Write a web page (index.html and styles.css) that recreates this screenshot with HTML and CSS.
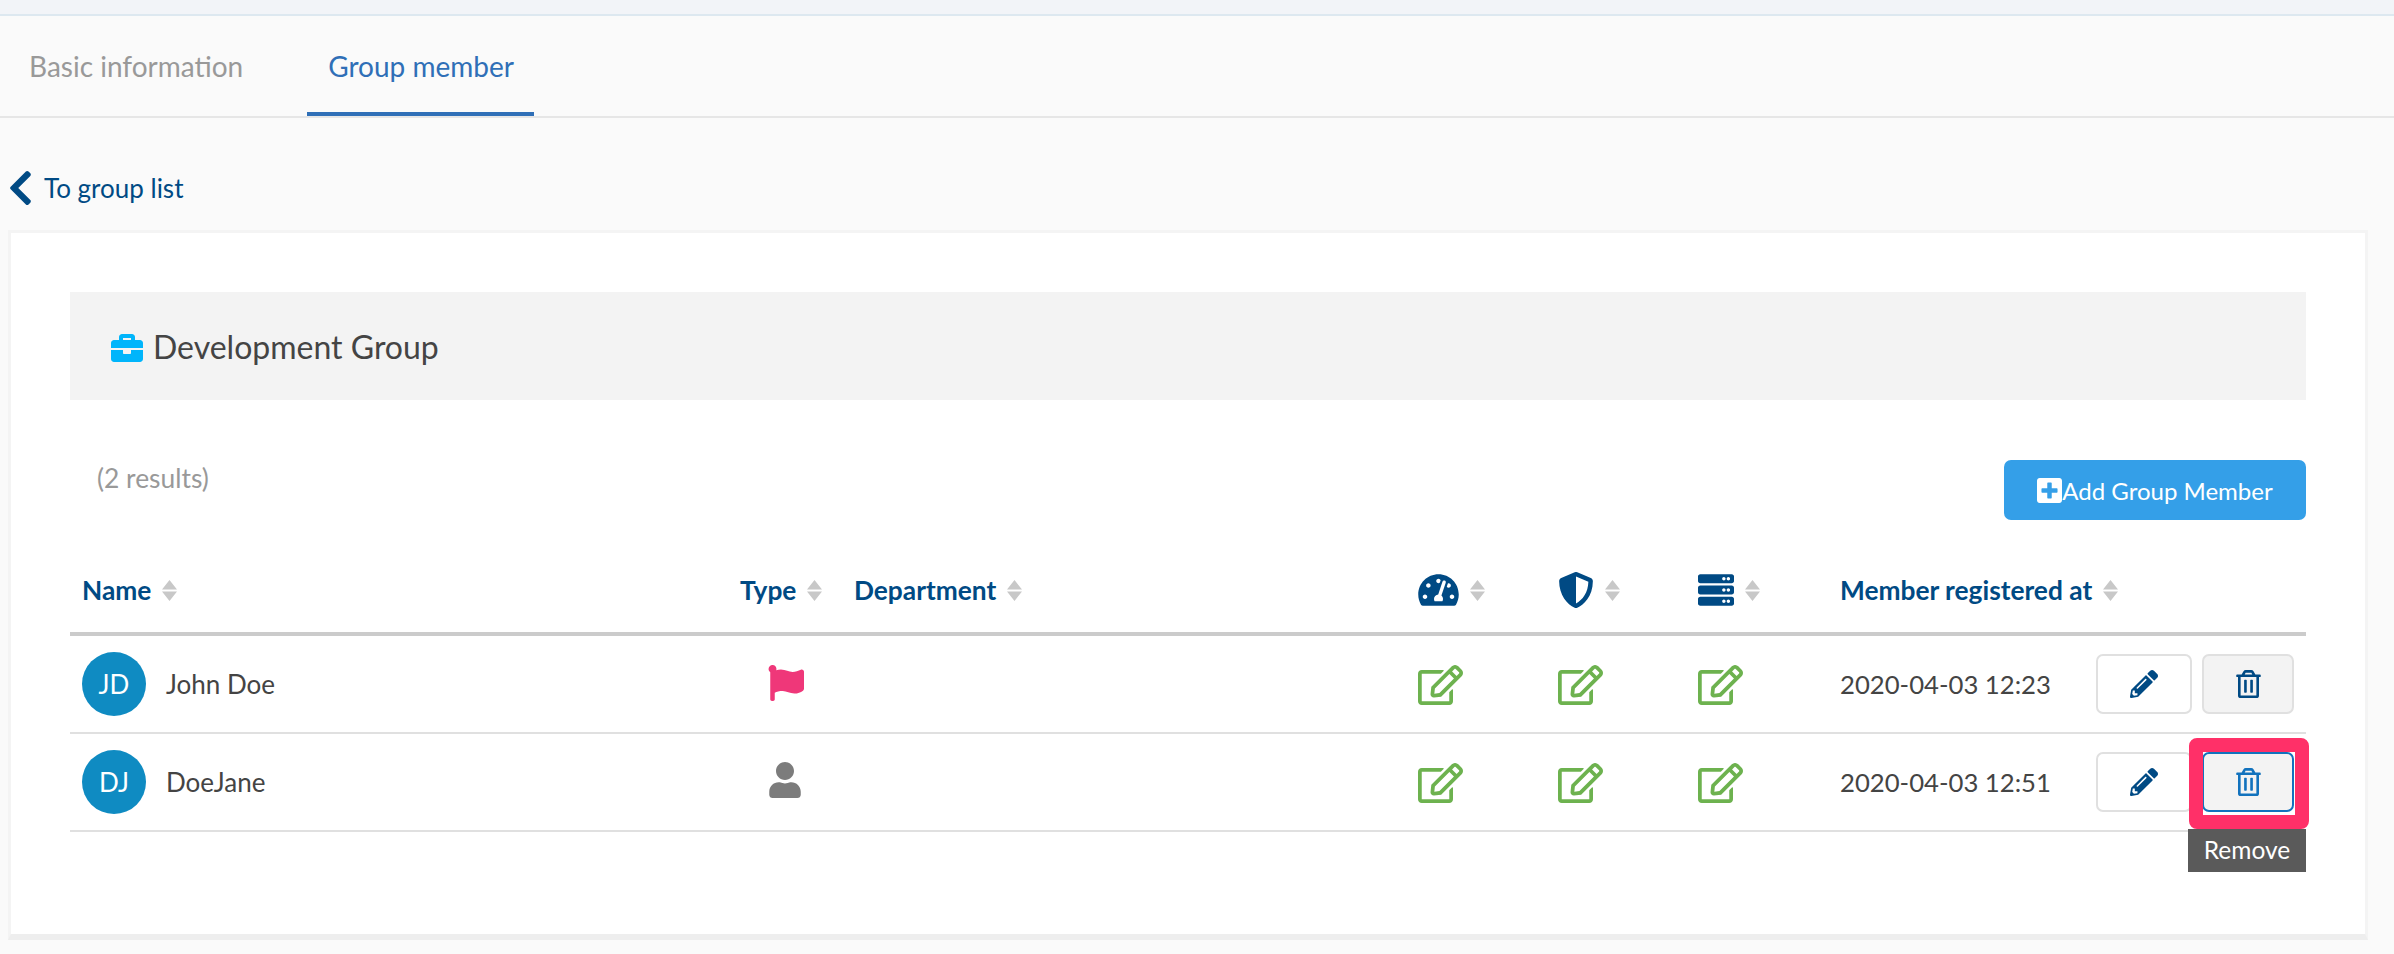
FILE: index.html
```html
<!DOCTYPE html>
<html lang="en">
<head>
<meta charset="utf-8">
<title>Group member</title>
<link rel="stylesheet" href="styles.css">
</head>
<body>
<svg class="sprites" aria-hidden="true">
  <symbol id="i-chevron" viewBox="0 0 320 512"><path d="M34.52 239.03L228.87 44.69c9.37-9.37 24.57-9.37 33.94 0l22.67 22.67c9.36 9.36 9.37 24.52.04 33.9L131.49 256l154.02 154.75c9.34 9.38 9.32 24.54-.04 33.9l-22.67 22.67c-9.37 9.37-24.57 9.37-33.94 0L34.52 272.97c-9.37-9.37-9.37-24.57 0-33.94z"/></symbol>
  <symbol id="i-briefcase" viewBox="0 0 512 512"><path d="M320 336c0 8.84-7.16 16-16 16h-96c-8.84 0-16-7.16-16-16v-48H0v144c0 25.6 22.4 48 48 48h416c25.6 0 48-22.4 48-48V288H320v48zm144-208h-80V80c0-25.6-22.4-48-48-48H176c-25.6 0-48 22.4-48 48v48H48c-25.6 0-48 22.4-48 48v80h512v-80c0-25.6-22.4-48-48-48zm-144 0H192V96h128v32z"/></symbol>
  <symbol id="i-plus" viewBox="0 0 448 512"><path d="M400 32H48C21.5 32 0 53.5 0 80v352c0 26.5 21.5 48 48 48h352c26.5 0 48-21.5 48-48V80c0-26.5-21.5-48-48-48zm-32 252c0 6.6-5.4 12-12 12h-92v92c0 6.6-5.4 12-12 12h-56c-6.6 0-12-5.4-12-12v-92H92c-6.6 0-12-5.4-12-12v-56c0-6.6 5.4-12 12-12h92v-92c0-6.6 5.4-12 12-12h56c6.6 0 12 5.4 12 12v92h92c6.6 0 12 5.4 12 12v56z"/></symbol>
  <symbol id="i-sort" viewBox="0 0 15 21"><path d="M7.5 0L15 9.5H0zM0 11.5h15L7.5 21z"/></symbol>
  <symbol id="i-gauge" viewBox="0 0 576 512"><path d="M288 32C128.94 32 0 160.94 0 320c0 52.8 14.25 102.26 39.06 144.8 5.61 9.62 16.3 15.2 27.44 15.2h443c11.14 0 21.83-5.58 27.44-15.2C561.75 422.26 576 372.8 576 320c0-159.06-128.94-288-288-288zm0 64c14.71 0 26.58 10.13 30.32 23.65-1.11 2.26-2.64 4.23-3.45 6.67l-9.22 27.67c-5.13 3.49-10.97 6.01-17.64 6.01-17.67 0-32-14.33-32-32S270.33 96 288 96zM96 384c-17.67 0-32-14.33-32-32s14.33-32 32-32 32 14.33 32 32-14.33 32-32 32zm48-160c-17.67 0-32-14.33-32-32s14.33-32 32-32 32 14.33 32 32-14.33 32-32 32zm246.77-72.41l-61.33 184C343.13 347.33 352 364.54 352 384c0 11.72-3.38 22.55-8.88 32H232.88c-5.5-9.45-8.88-20.28-8.88-32 0-33.94 26.5-61.43 59.9-63.59l61.34-184.01c4.17-12.56 17.73-19.45 30.36-15.17 12.57 4.19 19.35 17.79 15.17 30.36zm14.66 57.2l15.52-46.55c3.47-1.29 7.13-2.23 11.05-2.23 17.67 0 32 14.33 32 32s-14.33 32-32 32c-11.38-.01-20.89-6.28-26.57-15.22zM480 384c-17.67 0-32-14.33-32-32s14.33-32 32-32 32 14.33 32 32-14.33 32-32 32z"/></symbol>
  <symbol id="i-shield" viewBox="0 0 512 512"><path d="M466.5 83.7l-192-80a48.15 48.15 0 0 0-36.9 0l-192 80C27.7 91.1 16 108.6 16 128c0 198.5 114.5 335.7 221.5 380.3 11.8 4.9 25.1 4.9 36.9 0C360.1 472.6 496 349.3 496 128c0-19.4-11.7-36.9-29.5-44.3zM256.1 446.3l-.1-381 175.9 73.3c-3.3 151.4-82.1 261.1-175.8 307.7z"/></symbol>
  <symbol id="i-server" viewBox="0 0 512 512"><path d="M480 160H32c-17.673 0-32-14.327-32-32V64c0-17.673 14.327-32 32-32h448c17.673 0 32 14.327 32 32v64c0 17.673-14.327 32-32 32zm-48-88c-13.255 0-24 10.745-24 24s10.745 24 24 24 24-10.745 24-24-10.745-24-24-24zm-64 0c-13.255 0-24 10.745-24 24s10.745 24 24 24 24-10.745 24-24-10.745-24-24-24zm112 248H32c-17.673 0-32-14.327-32-32v-64c0-17.673 14.327-32 32-32h448c17.673 0 32 14.327 32 32v64c0 17.673-14.327 32-32 32zm-48-88c-13.255 0-24 10.745-24 24s10.745 24 24 24 24-10.745 24-24-10.745-24-24-24zm-64 0c-13.255 0-24 10.745-24 24s10.745 24 24 24 24-10.745 24-24-10.745-24-24-24zm112 248H32c-17.673 0-32-14.327-32-32v-64c0-17.673 14.327-32 32-32h448c17.673 0 32 14.327 32 32v64c0 17.673-14.327 32-32 32zm-48-88c-13.255 0-24 10.745-24 24s10.745 24 24 24 24-10.745 24-24-10.745-24-24-24zm-64 0c-13.255 0-24 10.745-24 24s10.745 24 24 24 24-10.745 24-24-10.745-24-24-24z"/></symbol>
  <symbol id="i-edit" viewBox="0 0 576 512"><path d="M402.3 344.9l32-32c5-5 13.7-1.5 13.7 5.7V464c0 26.5-21.5 48-48 48H48c-26.5 0-48-21.5-48-48V112c0-26.5 21.5-48 48-48h273.5c7.1 0 10.7 8.6 5.7 13.7l-32 32c-1.5 1.5-3.5 2.3-5.7 2.3H48v352h352V350.5c0-2.1.8-4.1 2.3-5.6zm156.6-201.8L296.3 405.7l-90.4 10c-26.2 2.9-48.5-19.2-45.6-45.6l10-90.4L432.9 17.1c22.9-22.9 59.9-22.9 82.7 0l43.2 43.2c22.9 22.9 22.9 60 .1 82.8zM460.1 174L402 115.9 216.2 301.8l-7.3 65.3 65.3-7.3L460.1 174zm64.8-79.7l-43.2-43.2c-4.1-4.1-10.8-4.1-14.8 0L436 82l58.1 58.1 30.9-30.9c4-4.2 4-10.8-.1-14.9z"/></symbol>
  <symbol id="i-pencil" viewBox="0 0 512 512"><path d="M497.9 142.1l-46.1 46.1c-4.7 4.7-12.3 4.7-17 0l-111-111c-4.7-4.7-4.7-12.3 0-17l46.1-46.1c18.7-18.7 49.1-18.7 67.9 0l60.1 60.1c18.8 18.7 18.8 49.1 0 67.9zM284.2 99.8L21.6 362.4.4 483.9c-2.9 16.4 11.4 30.6 27.8 27.8l121.5-21.3 262.6-262.6c4.7-4.7 4.7-12.3 0-17l-111-111c-4.8-4.7-12.4-4.7-17.1 0zM124.1 339.9c-5.5-5.5-5.5-14.3 0-19.8l154-154c5.5-5.5 14.3-5.5 19.8 0s5.5 14.3 0 19.8l-154 154c-5.5 5.5-14.3 5.5-19.8 0zM88 424h48v36.3l-64.5 11.3-31.1-31.1L51.7 376H88v48z"/></symbol>
  <symbol id="i-trash" viewBox="0 0 448 512"><path d="M268 416h24a12 12 0 0 0 12-12V188a12 12 0 0 0-12-12h-24a12 12 0 0 0-12 12v216a12 12 0 0 0 12 12zM432 80h-82.41l-34-56.7A48 48 0 0 0 274.41 0H173.59a48 48 0 0 0-41.16 23.3L98.41 80H16A16 16 0 0 0 0 96v16a16 16 0 0 0 16 16h16v336a48 48 0 0 0 48 48h288a48 48 0 0 0 48-48V128h16a16 16 0 0 0 16-16V96a16 16 0 0 0-16-16zM171.84 50.91A6 6 0 0 1 177 48h94a6 6 0 0 1 5.15 2.91L293.61 80H154.39zM368 464H80V128h288zm-212-48h24a12 12 0 0 0 12-12V188a12 12 0 0 0-12-12h-24a12 12 0 0 0-12 12v216a12 12 0 0 0 12 12z"/></symbol>
  <symbol id="i-flag" viewBox="0 0 512 512"><path d="M349.565 98.783C295.978 98.783 251.721 64 184.348 64c-24.955 0-47.309 4.384-68.045 12.013a55.947 55.947 0 0 0 3.586-23.562C118.117 24.015 94.806 1.206 66.338.048 34.345-1.254 8 24.296 8 56c0 19.026 9.497 35.825 24 45.945V488c0 13.255 10.745 24 24 24h16c13.255 0 24-10.745 24-24v-94.4c28.311-12.064 63.582-22.122 114.435-22.122 53.588 0 97.844 34.783 165.217 34.783 48.169 0 86.667-16.294 122.505-40.858C506.84 359.452 512 349.571 512 339.045v-243.1c0-23.393-24.269-38.87-45.485-29.016-34.338 15.948-76.454 31.854-116.95 31.854z"/></symbol>
  <symbol id="i-user" viewBox="0 0 448 512"><path d="M224 256c70.7 0 128-57.3 128-128S294.7 0 224 0 96 57.3 96 128s57.3 128 128 128zm89.6 32h-16.7c-22.2 10.2-46.9 16-72.9 16s-50.6-5.8-72.9-16h-16.7C60.2 288 0 348.2 0 422.4V464c0 26.5 21.5 48 48 48h352c26.5 0 48-21.5 48-48v-41.6c0-74.2-60.2-134.4-134.4-134.4z"/></symbol>
</svg>

<div class="topstrip"></div>
<nav class="tabs">
  <a class="tab">Basic information</a>
  <a class="tab tab-active">Group member</a>
</nav>

<a class="back"><svg class="ic-chevron"><use href="#i-chevron"/></svg><span>To group list</span></a>

<main class="card">
  <header class="group-head">
    <svg class="ic-briefcase"><use href="#i-briefcase"/></svg>
    <h1 class="group-title">Development Group</h1>
  </header>

  <div class="toolbar">
    <span class="results">(2 results)</span>
    <button class="add-btn"><svg class="ic-plus"><use href="#i-plus"/></svg>Add Group Member</button>
  </div>

  <table class="members">
    <colgroup>
      <col class="c-name"><col class="c-type"><col class="c-dept"><col class="c-perm"><col class="c-perm"><col class="c-perm3"><col>
    </colgroup>
    <thead>
      <tr>
        <th><span class="th-in">Name<svg class="ic-sort"><use href="#i-sort"/></svg></span></th>
        <th><span class="th-in">Type<svg class="ic-sort"><use href="#i-sort"/></svg></span></th>
        <th><span class="th-in">Department<svg class="ic-sort"><use href="#i-sort"/></svg></span></th>
        <th><span class="th-in"><svg class="ic-head ic-wide"><use href="#i-gauge"/></svg><svg class="ic-sort"><use href="#i-sort"/></svg></span></th>
        <th><span class="th-in"><svg class="ic-head"><use href="#i-shield"/></svg><svg class="ic-sort"><use href="#i-sort"/></svg></span></th>
        <th><span class="th-in"><svg class="ic-head"><use href="#i-server"/></svg><svg class="ic-sort"><use href="#i-sort"/></svg></span></th>
        <th><span class="th-in">Member registered at<svg class="ic-sort"><use href="#i-sort"/></svg></span></th>
      </tr>
    </thead>
    <tbody>
      <tr>
        <td><div class="person"><span class="avatar">JD</span><span>John Doe</span></div></td>
        <td><svg class="ic-flag"><use href="#i-flag"/></svg></td>
        <td></td>
        <td><svg class="ic-edit"><use href="#i-edit"/></svg></td>
        <td><svg class="ic-edit"><use href="#i-edit"/></svg></td>
        <td><svg class="ic-edit"><use href="#i-edit"/></svg></td>
        <td>
          <div class="last-cell">
            <span>2020-04-03 12:23</span>
            <div class="actions">
              <button class="btn btn-edit"><svg class="ic-pencil"><use href="#i-pencil"/></svg></button>
              <button class="btn btn-del"><svg class="ic-trash"><use href="#i-trash"/></svg></button>
            </div>
          </div>
        </td>
      </tr>
      <tr>
        <td><div class="person"><span class="avatar">DJ</span><span>DoeJane</span></div></td>
        <td><svg class="ic-user"><use href="#i-user"/></svg></td>
        <td></td>
        <td><svg class="ic-edit"><use href="#i-edit"/></svg></td>
        <td><svg class="ic-edit"><use href="#i-edit"/></svg></td>
        <td><svg class="ic-edit"><use href="#i-edit"/></svg></td>
        <td>
          <div class="last-cell">
            <span>2020-04-03 12:51</span>
            <div class="actions">
              <button class="btn btn-edit"><svg class="ic-pencil"><use href="#i-pencil"/></svg></button>
              <div class="del-wrap">
                <button class="btn btn-del btn-focus"><svg class="ic-trash"><use href="#i-trash"/></svg></button>
                <span class="highlight"></span>
                <span class="tooltip">Remove</span>
              </div>
            </div>
          </div>
        </td>
      </tr>
    </tbody>
  </table>
</main>
</body>
</html>
```

FILE: styles.css
```css
* { box-sizing: border-box; }
html, body { margin: 0; padding: 0; }
body {
  background: #fafafa;
  font-family: Lato, "Open Sans", sans-serif;
  color: #444;
  font-size: 26px;
  height: 954px;
  overflow: hidden;
}
.sprites { display: none; }
svg { display: block; fill: currentColor; flex: none; }

.topstrip { height: 16px; background: #f2f4f8; border-bottom: 2px solid #dde8f0; }

.tabs { display: flex; gap: 42px; height: 102px; border-bottom: 2px solid #e6e6e6; padding-left: 7px; }
.tab {
  display: flex; align-items: center; white-space: nowrap;
  font-size: 28px; color: #999; height: 100px; padding: 0 22px;
}
.tab-active {
  color: #2f6fb7;
  padding: 4px 20px 0 21px;
  border-bottom: 4px solid #2f6fb7;
}

.back {
  display: flex; align-items: flex-end; color: #004a84;
  height: 112px; padding: 0 0 26px 8px; gap: 11px; font-size: 26px;
}
.ic-chevron { width: 25px; height: 40px; margin-bottom: -4px; }

.card {
  margin-left: 8px; width: 2360px; height: 710px; background: #fff;
  border: 3px solid #f4f4f4; border-bottom-width: 6px; border-bottom-color: #eee;
  padding: 59px 59px 0;
}

.group-head {
  display: flex; align-items: center; gap: 10px;
  height: 108px; background: #f3f3f3; padding-left: 41px;
}
.ic-briefcase { width: 32px; height: 32px; color: #00b5fb; margin-top: 4px; }
.group-title { margin: 0; font-size: 32px; font-weight: 400; color: #444; }

.toolbar { display: flex; justify-content: space-between; align-items: flex-start; margin-top: 60px; height: 60px; padding-left: 27px; }
.results { color: #999; font-size: 26.4px; line-height: 36px; }
.add-btn {
  display: flex; align-items: center; justify-content: center;
  width: 302px; height: 60px; border: 0; border-radius: 7px;
  background: #349fe8; color: #fff; font: 400 24px Lato, sans-serif;
}
.ic-plus { width: 25px; height: 29px; }

.members { width: 2236px; table-layout: fixed; border-collapse: separate; border-spacing: 0; }
.c-name { width: 657px; }
.c-type { width: 114px; }
.c-dept { width: 564px; }
.c-perm { width: 140px; }
.c-perm3 { width: 142px; }

.members th {
  height: 116px; padding: 52px 13px 24px; border-bottom: 4px solid #cbcbcb;
  text-align: left; font-size: 26.3px; font-weight: 700; color: #004a84;
}
.members th:first-child, .members td:first-child { padding-left: 12px; }
.th-in { display: flex; align-items: center; height: 36px; gap: 11px; }
.ic-sort { width: 15px; height: 21px; color: #c8c8c8; }
.ic-head { width: 36px; height: 36px; }
.ic-wide { width: 41px; }

.members td { height: 98px; padding: 0 12px 0 13px; border-bottom: 2px solid #e0e0e0; vertical-align: middle; }
.person { display: flex; align-items: center; gap: 20px; }
.avatar {
  width: 64px; height: 64px; border-radius: 50%; background: #0f8bc2; color: #fff;
  display: flex; align-items: center; justify-content: center; font-size: 26px;
}
.ic-flag { width: 36px; height: 36px; color: #ef3779; margin: 0 0 2px 28px; }
.ic-user { width: 32px; height: 36px; color: #7c7c7c; margin: 0 0 4px 29px; }
.ic-edit { width: 45px; height: 40px; color: #6db24f; margin-top: 2px; }

.last-cell { display: flex; align-items: center; justify-content: space-between; font-size: 25.7px; }
.actions { display: flex; gap: 10px; align-items: center; }
.btn {
  display: flex; align-items: center; justify-content: center;
  height: 60px; border: 2px solid #e0e0e0; border-radius: 7px; background: #fff; padding: 0; color: #004a84;
}
.btn-edit { width: 96px; }
.btn-del { width: 92px; background: #f3f3f3; }
.btn-focus { border-color: #1272bd; color: #1272bd; }
.ic-pencil { width: 28px; height: 28px; }
.ic-trash { width: 25px; height: 28px; }

.del-wrap { position: relative; }
.highlight {
  position: absolute; left: -13px; top: -14px; width: 120px; height: 91px;
  border: 14px solid #ff3068; border-radius: 8px;
}
.tooltip {
  position: absolute; left: -14px; top: 77px; width: 118px; height: 43px;
  background: #5a5a5a; color: #fff; font-size: 24.5px; padding-bottom: 2px;
  display: flex; align-items: center; justify-content: center;
}
```
